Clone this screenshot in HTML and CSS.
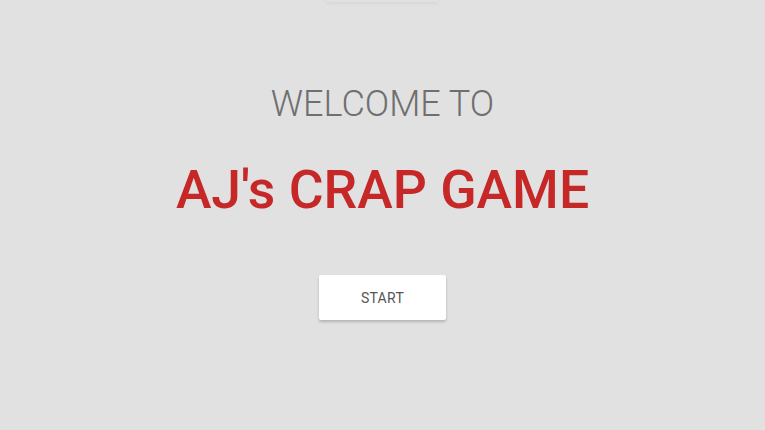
FILE: index.html
```html
<!DOCTYPE html>
<html lang="en">
<head>
  <meta charset="UTF-8">
  <meta name="viewport" content="width=device-width, initial-scale=1.0">
  <title>AJ's Crap Game</title>
  <link rel="stylesheet" href="styles.css">
</head>
<body>
  <!-- bottom edge of the toolbar peeking in -->
  <div class="top-tab"></div>

  <main class="intro">
    <h2 class="welcome">WELCOME TO</h2>
    <h1 class="title">AJ's CRAP GAME</h1>
    <button class="start">START</button>
  </main>
</body>
</html>
```

FILE: styles.css
```css
/* General */
body {
  margin: 0;
  padding: 0;
  font-family: Roboto, 'Liberation Sans', sans-serif;
  background: #e1e1e1;
  height: 100vh;
  overflow: hidden;
  position: relative;
}

.top-tab {
  position: absolute;
  top: -10px;
  left: 326px;
  width: 112px;
  height: 12px;
  background: #e1e1e1;
  box-shadow: 0 1px 4px rgba(0, 0, 0, 0.07);
}

/* Intro screen */
.intro {
  display: flex;
  flex-direction: column;
  align-items: center;
  padding-top: 84px;
}

.welcome {
  margin: 0;
  font-size: 36px;
  font-weight: 300;
  color: #6f6f6f;
  line-height: 40px;
}

.title {
  margin: 36px 0 0;
  font-size: 53.5px;
  font-weight: 500;
  color: #c62828;
  line-height: 60px;
}

.start {
  margin-top: 55px;
  width: 127px;
  height: 45px;
  border: none;
  border-radius: 2px;
  background: #fff;
  color: #555;
  font-family: inherit;
  font-size: 14px;
  font-weight: 400;
  letter-spacing: 0.3px;
  box-shadow: 0 2px 3px rgba(0, 0, 0, 0.2);
  cursor: pointer;
}
```
